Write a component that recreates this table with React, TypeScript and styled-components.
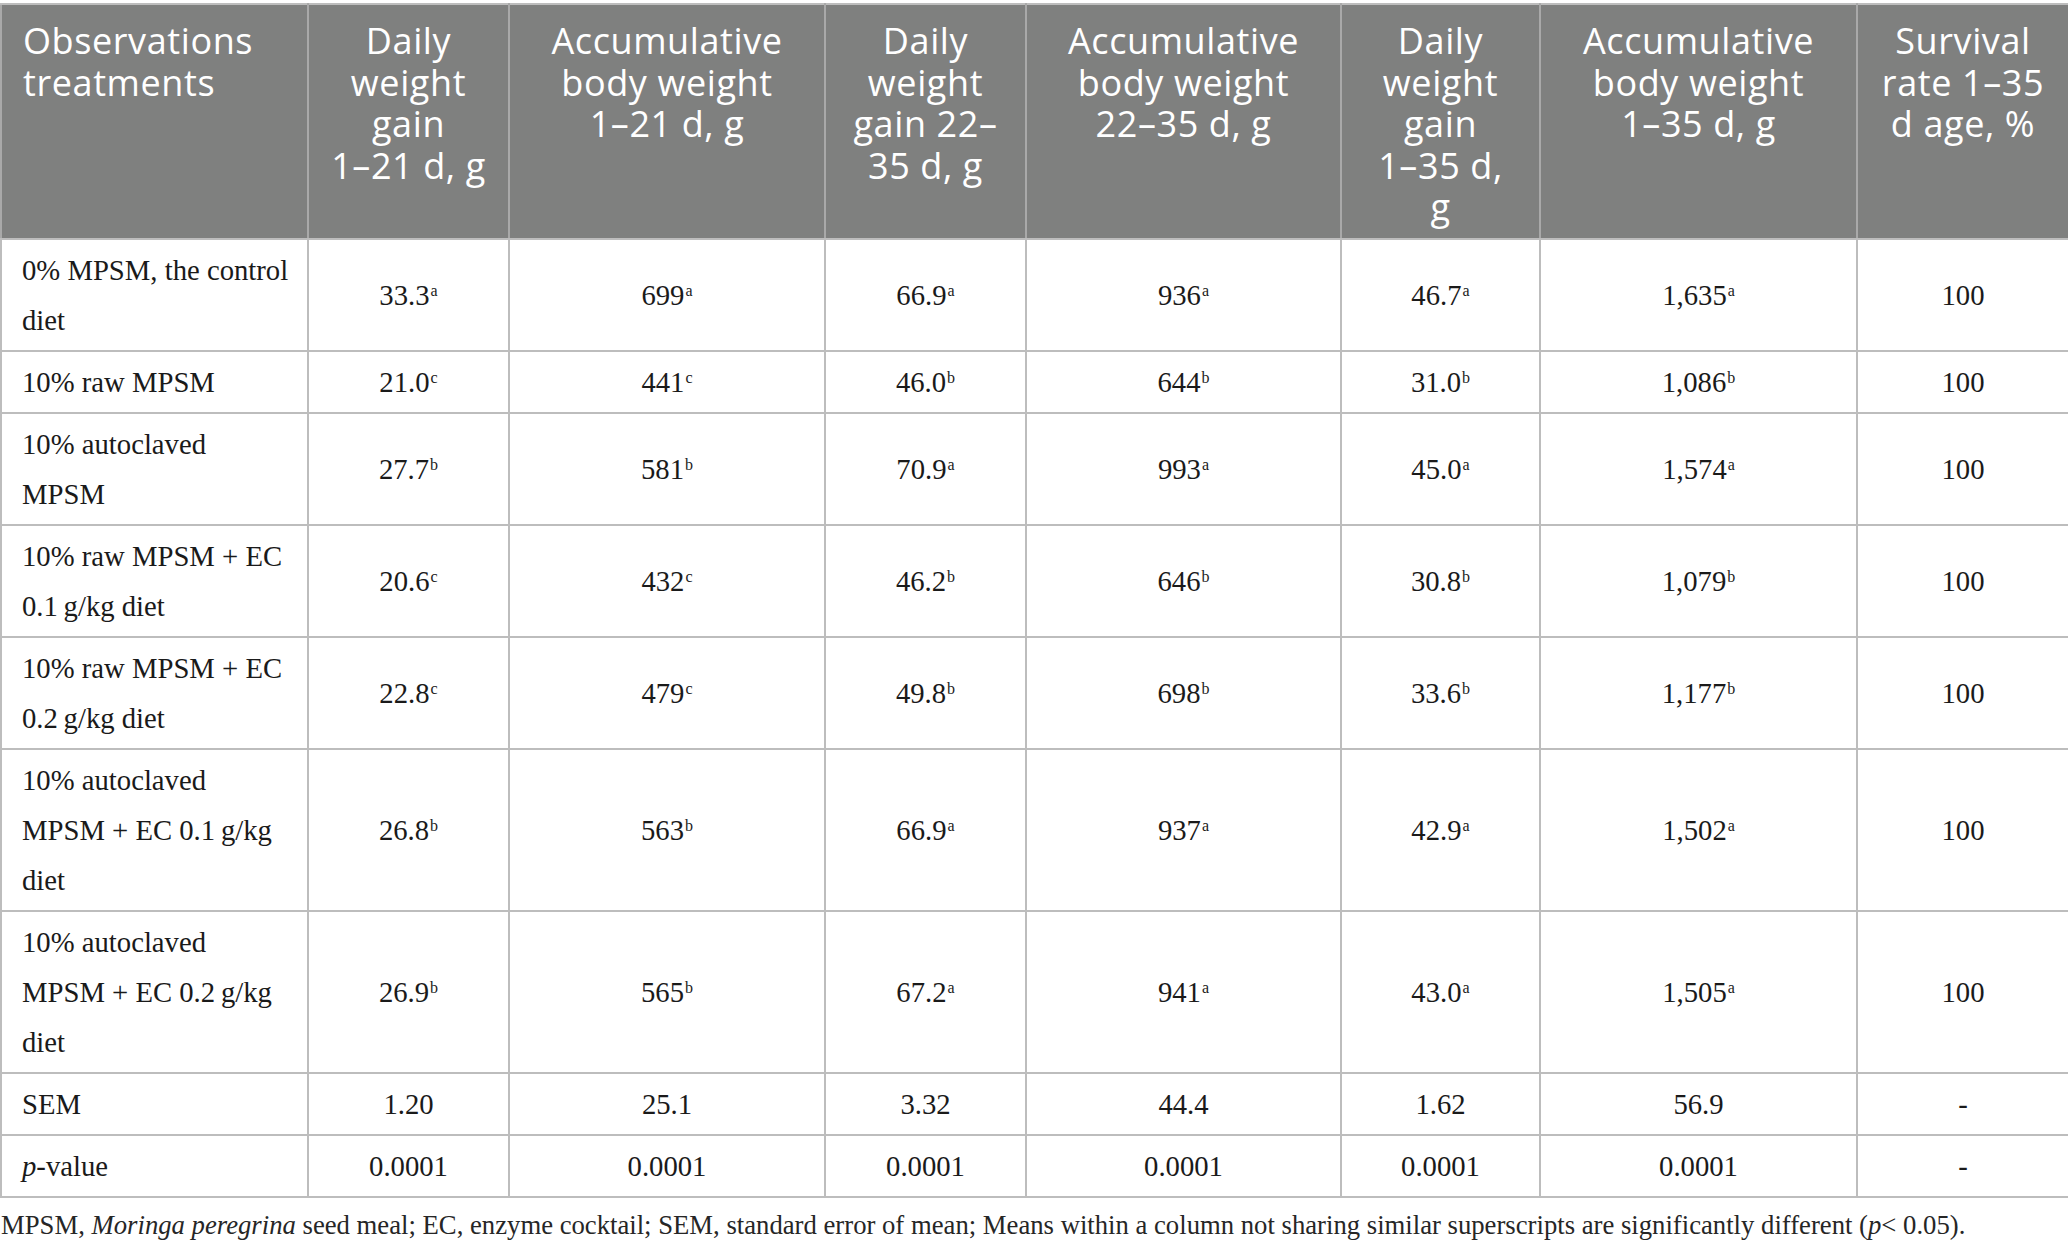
import React from 'react';
import styled, { createGlobalStyle } from 'styled-components';

const GlobalStyle = createGlobalStyle`
  html, body {
    margin: 0;
    padding: 0;
    background: #fff;
  }
`;

const Page = styled.div`
  width: 2068px;
  padding-top: 3px;
`;

const Table = styled.table`
  width: 2068px;
  table-layout: fixed;
  border-collapse: collapse;
  border: 2px solid #bdbdbd;
`;

const HeadCell = styled.th<{ $left?: boolean }>`
  background: #7f807f;
  color: #fff;
  font-family: 'Open Sans', 'Noto Sans', sans-serif;
  font-weight: 400;
  font-size: 36px;
  letter-spacing: 0.6px;
  line-height: 41.5px;
  text-align: ${p => (p.$left ? 'left' : 'center')};
  vertical-align: top;
  padding: 15px 18px 10px ${p => (p.$left ? '21px' : '18px')};
  border: 2px solid #a9a9a9;
  border-top-color: #bdbdbd;
  border-bottom-color: #bdbdbd;
`;

const Cell = styled.td<{ $left?: boolean }>`
  font-family: 'Liberation Serif', 'Times New Roman', serif;
  font-size: 28.7px;
  line-height: 50px;
  color: #1a1a1a;
  text-align: ${p => (p.$left ? 'left' : 'center')};
  vertical-align: middle;
  padding: 5px 20px;
  border: 2px solid #bdbdbd;
`;

const Line = styled.span`
  display: block;
  white-space: nowrap;
`;

const Sup = styled.sup`
  font-size: 16px;
  line-height: 0;
  vertical-align: 9px;
  margin-left: 1px;
`;

const Note = styled.p`
  margin: 9px 0 0 1px;
  font-family: 'Liberation Serif', 'Times New Roman', serif;
  font-size: 26.7px;
  line-height: 36px;
  color: #262626;
  white-space: nowrap;
`;

const colWidths = [307, 201, 316, 201, 315, 199, 317, 212];

const headers: string[][] = [
  ['Observations', 'treatments'],
  ['Daily', 'weight', 'gain', '1–21 d, g'],
  ['Accumulative', 'body weight', '1–21 d, g'],
  ['Daily', 'weight', 'gain 22–', '35 d, g'],
  ['Accumulative', 'body weight', '22–35 d, g'],
  ['Daily', 'weight', 'gain', '1–35 d,', 'g'],
  ['Accumulative', 'body weight', '1–35 d, g'],
  ['Survival', 'rate 1–35', 'd age, %'],
];

type Row = { label: React.ReactNode[]; vals: string[] };

const rows: Row[] = [
  {
    label: ['0% MPSM, the control', 'diet'],
    vals: ['33.3 a', '699 a', '66.9 a', '936 a', '46.7 a', '1,635 a', '100'],
  },
  {
    label: ['10% raw MPSM'],
    vals: ['21.0 c', '441 c', '46.0 b', '644 b', '31.0 b', '1,086 b', '100'],
  },
  {
    label: ['10% autoclaved', 'MPSM'],
    vals: ['27.7 b', '581 b', '70.9 a', '993 a', '45.0 a', '1,574 a', '100'],
  },
  {
    label: ['10% raw MPSM + EC', '0.1\u2009g/kg diet'],
    vals: ['20.6 c', '432 c', '46.2 b', '646 b', '30.8 b', '1,079 b', '100'],
  },
  {
    label: ['10% raw MPSM + EC', '0.2\u2009g/kg diet'],
    vals: ['22.8 c', '479 c', '49.8 b', '698 b', '33.6 b', '1,177 b', '100'],
  },
  {
    label: ['10% autoclaved', 'MPSM + EC 0.1\u2009g/kg', 'diet'],
    vals: ['26.8 b', '563 b', '66.9 a', '937 a', '42.9 a', '1,502 a', '100'],
  },
  {
    label: ['10% autoclaved', 'MPSM + EC 0.2\u2009g/kg', 'diet'],
    vals: ['26.9 b', '565 b', '67.2 a', '941 a', '43.0 a', '1,505 a', '100'],
  },
  {
    label: ['SEM'],
    vals: ['1.20', '25.1', '3.32', '44.4', '1.62', '56.9', '-'],
  },
  {
    label: [
      <>
        <i>p</i>-value
      </>,
    ],
    vals: ['0.0001', '0.0001', '0.0001', '0.0001', '0.0001', '0.0001', '-'],
  },
];

const Value = ({ v }: { v: string }) => {
  const [num, sup] = v.split(' ');
  return (
    <>
      {num}
      {sup && <Sup>{sup}</Sup>}
    </>
  );
};

export default function App() {
  return (
    <Page>
      <GlobalStyle />
      <Table>
        <colgroup>
          {colWidths.map((w, i) => (
            <col key={i} style={{ width: w }} />
          ))}
        </colgroup>
        <thead>
          <tr>
            {headers.map((lines, i) => (
              <HeadCell key={i} $left={i === 0}>
                {lines.map((l, j) => (
                  <Line key={j}>{l}</Line>
                ))}
              </HeadCell>
            ))}
          </tr>
        </thead>
        <tbody>
          {rows.map((r, i) => (
            <tr key={i}>
              <Cell $left>
                {r.label.map((l, j) => (
                  <Line key={j}>{l}</Line>
                ))}
              </Cell>
              {r.vals.map((v, j) => (
                <Cell key={j}>
                  <Value v={v} />
                </Cell>
              ))}
            </tr>
          ))}
        </tbody>
      </Table>
      <Note>
        MPSM, <i>Moringa peregrina</i> seed meal; EC, enzyme cocktail; SEM,
        standard error of mean; Means within a column not sharing similar
        superscripts are significantly different (<i>p</i>{'<'} 0.05).
      </Note>
    </Page>
  );
}
